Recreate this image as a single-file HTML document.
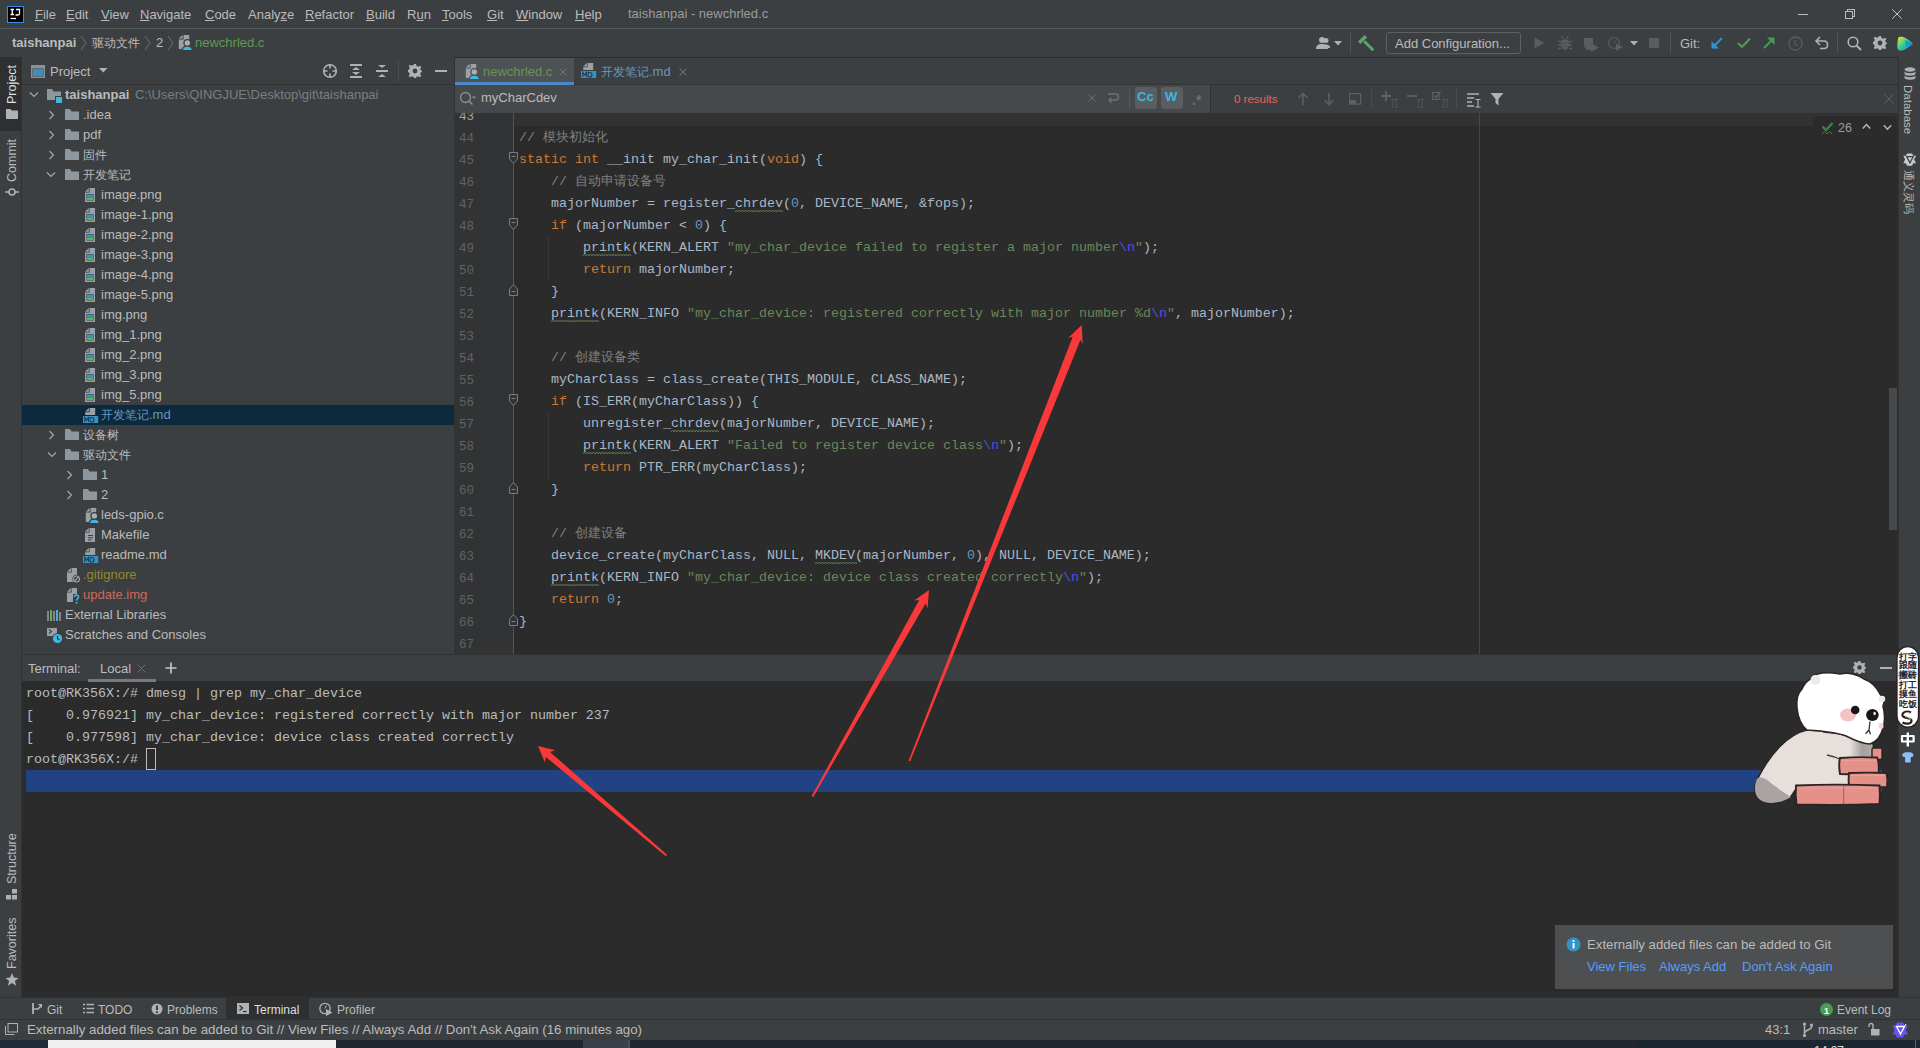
<!DOCTYPE html>
<html><head><meta charset="utf-8">
<style>
*{margin:0;padding:0;box-sizing:border-box}
html,body{width:1920px;height:1048px;overflow:hidden;background:#3c3f41}
body{position:relative;font-family:"Liberation Sans",sans-serif;font-size:13px;color:#bbbbbb;line-height:16px}
.a{position:absolute;white-space:nowrap}
.m{font-family:"Liberation Mono",monospace}
svg.a{overflow:visible}
</style></head><body>
<div class="a" style="left:0px;top:0px;width:1920px;height:28px;background:#3c3f41;"></div>
<div class="a" style="left:0px;top:28px;width:1920px;height:1px;background:#515658;"></div>
<svg class="a" style="left:7px;top:6px;" width="17" height="17" viewBox="0 0 17 17"><rect x="0.5" y="0.5" width="16" height="16" fill="#000" stroke="#2f8cff"/><path d="M3.5 3.5H7M5.25 3.5V8.5M3.5 8.5H7" stroke="#fff" stroke-width="1.3"/><path d="M9 3.5H12.5V7.5C12.5 8.5 12 9 11 9H8.5" stroke="#fff" stroke-width="1.3" fill="none"/><path d="M3.5 12.5H9" stroke="#fff" stroke-width="1.3"/></svg>
<div class="a" style="left:35px;top:7px;color:#bbbbbb;font-size:13px;font-weight:normal;font-family:"Liberation Sans",sans-serif;"><u>F</u>ile</div>
<div class="a" style="left:66px;top:7px;color:#bbbbbb;font-size:13px;font-weight:normal;font-family:"Liberation Sans",sans-serif;"><u>E</u>dit</div>
<div class="a" style="left:101px;top:7px;color:#bbbbbb;font-size:13px;font-weight:normal;font-family:"Liberation Sans",sans-serif;"><u>V</u>iew</div>
<div class="a" style="left:140px;top:7px;color:#bbbbbb;font-size:13px;font-weight:normal;font-family:"Liberation Sans",sans-serif;"><u>N</u>avigate</div>
<div class="a" style="left:205px;top:7px;color:#bbbbbb;font-size:13px;font-weight:normal;font-family:"Liberation Sans",sans-serif;"><u>C</u>ode</div>
<div class="a" style="left:248px;top:7px;color:#bbbbbb;font-size:13px;font-weight:normal;font-family:"Liberation Sans",sans-serif;">Analy<u>z</u>e</div>
<div class="a" style="left:305px;top:7px;color:#bbbbbb;font-size:13px;font-weight:normal;font-family:"Liberation Sans",sans-serif;"><u>R</u>efactor</div>
<div class="a" style="left:366px;top:7px;color:#bbbbbb;font-size:13px;font-weight:normal;font-family:"Liberation Sans",sans-serif;"><u>B</u>uild</div>
<div class="a" style="left:407px;top:7px;color:#bbbbbb;font-size:13px;font-weight:normal;font-family:"Liberation Sans",sans-serif;">R<u>u</u>n</div>
<div class="a" style="left:442px;top:7px;color:#bbbbbb;font-size:13px;font-weight:normal;font-family:"Liberation Sans",sans-serif;"><u>T</u>ools</div>
<div class="a" style="left:487px;top:7px;color:#bbbbbb;font-size:13px;font-weight:normal;font-family:"Liberation Sans",sans-serif;"><u>G</u>it</div>
<div class="a" style="left:516px;top:7px;color:#bbbbbb;font-size:13px;font-weight:normal;font-family:"Liberation Sans",sans-serif;"><u>W</u>indow</div>
<div class="a" style="left:575px;top:7px;color:#bbbbbb;font-size:13px;font-weight:normal;font-family:"Liberation Sans",sans-serif;"><u>H</u>elp</div>
<div class="a" style="left:628px;top:6px;color:#9a9c9e;font-size:13px;font-weight:normal;font-family:"Liberation Sans",sans-serif;">taishanpai - newchrled.c</div>
<div class="a" style="left:1798px;top:14px;width:10px;height:1px;background:#bdbdbd;"></div>
<div class="a" style="left:1847px;top:9px;width:8px;height:8px;border:1px solid #bdbdbd"></div>
<div class="a" style="left:1845px;top:11px;width:8px;height:8px;border:1px solid #bdbdbd;background:#3c3f41"></div>
<svg class="a" style="left:1892px;top:9px;" width="10" height="10" viewBox="0 0 10 10"><path d="M0.3 0.3L9.7 9.7M9.7 0.3L0.3 9.7" stroke="#c4c4c4" stroke-width="1"/></svg>
<div class="a" style="left:0px;top:29px;width:1920px;height:28px;background:#3c3f41;"></div>
<div class="a" style="left:0px;top:57px;width:1920px;height:1px;background:#2b2b2b;"></div>
<div class="a" style="left:12px;top:35px;color:#bbbbbb;font-size:13px;font-weight:bold;font-family:"Liberation Sans",sans-serif;">taishanpai</div>
<svg class="a" style="left:80px;top:35px;" width="8" height="16" viewBox="0 0 8 16"><path d="M1 1L6 8L1 15" stroke="#6c6f71" fill="none" stroke-width="1"/></svg>
<div class="a" style="left:92px;top:35px;color:#bbbbbb;font-size:13px;font-weight:normal;font-family:"Liberation Sans",sans-serif;"><span style="font-size:12px">驱动文件</span></div>
<div class="a" style="left:156px;top:35px;color:#bbbbbb;font-size:13px;font-weight:normal;font-family:"Liberation Sans",sans-serif;">2</div>
<svg class="a" style="left:144px;top:35px;" width="8" height="16" viewBox="0 0 8 16"><path d="M1 1L6 8L1 15" stroke="#6c6f71" fill="none" stroke-width="1"/></svg>
<svg class="a" style="left:167px;top:35px;" width="8" height="16" viewBox="0 0 8 16"><path d="M1 1L6 8L1 15" stroke="#6c6f71" fill="none" stroke-width="1"/></svg>
<svg class="a" style="left:178px;top:34px;" width="16" height="17" viewBox="0 0 16 17"><path d="M0.8 4.6L4.6 0.9V4.6Z" fill="#9aa0a5"/><path d="M5.6 0.9H11.2V15H0.8V5.6H5.6Z" fill="#9aa0a5"/><circle cx="9.3" cy="9" r="4" fill="#3c3f41"/><circle cx="9.3" cy="9" r="2.7" fill="#a9afb4"/><path d="M3.7 16.6C3.7 13 6 11.8 9.3 11.8C12.6 11.8 14.9 13 14.9 16.6Z" fill="#3c3f41"/><path d="M5 16C5 13.6 6.8 12.8 9.3 12.8C11.8 12.8 13.6 13.6 13.6 16Z" fill="#40b6e0"/></svg>
<div class="a" style="left:195px;top:35px;color:#629755;font-size:13px;font-weight:normal;font-family:"Liberation Sans",sans-serif;">newchrled.c</div>
<svg class="a" style="left:1316px;top:36px;" width="18" height="14" viewBox="0 0 18 14"><circle cx="6" cy="4" r="3" fill="#afb1b3"/><path d="M0 13C0 9 2.5 8 6 8C9.5 8 12 9 12 13Z" fill="#afb1b3"/><circle cx="10" cy="4.5" r="2.5" fill="#afb1b3"/><path d="M9 8.5C12 8.5 14 9 14 12H12" fill="#afb1b3"/></svg>
<svg class="a" style="left:1334px;top:41px;" width="9" height="5" viewBox="0 0 9 5"><path d="M0 0H8L4 4.5Z" fill="#afb1b3"/></svg>
<div class="a" style="left:1350px;top:33px;width:1px;height:20px;background:#515658;"></div>
<svg class="a" style="left:1358px;top:35px;" width="17" height="16" viewBox="0 0 17 16"><path d="M0 6.6L6.6 0L9 2.4L2.4 9Z" fill="#59a869"/><path d="M6.2 6.2L15.3 15.3" stroke="#59a869" stroke-width="2.9"/></svg>
<div class="a" style="left:1386px;top:32px;width:135px;height:22px;border:1px solid #5e6060;border-radius:3px"></div>
<div class="a" style="left:1395px;top:36px;color:#bbbbbb;font-size:13px;font-weight:normal;font-family:"Liberation Sans",sans-serif;">Add Configuration...</div>
<svg class="a" style="left:1534px;top:37px;" width="11" height="12" viewBox="0 0 11 12"><path d="M0.5 0.5L10.5 6L0.5 11.5Z" fill="#5a5d5f"/></svg>
<svg class="a" style="left:1558px;top:36px;" width="14" height="14" viewBox="0 0 14 14"><ellipse cx="7" cy="8.3" rx="4.3" ry="5.3" fill="#5a5d5f"/><path d="M0 5.5H3M11 5.5H14M0 9H3M11 9H14M0 12.5H3M11 12.5H14M3.5 0.5L5 2.5M10.5 0.5L9 2.5" stroke="#5a5d5f" stroke-width="1.4"/><path d="M4 7H10M4 10.3H10" stroke="#4a4d4f" stroke-width="1"/></svg>
<svg class="a" style="left:1583px;top:37px;" width="17" height="15" viewBox="0 0 17 15"><path d="M1 1H10V8C10 11 7 13 5.5 13C4 13 1 11 1 8Z" fill="#5a5d5f"/><path d="M8 6L16 10.5L8 15Z" fill="#5a5d5f"/></svg>
<svg class="a" style="left:1608px;top:36px;" width="16" height="16" viewBox="0 0 16 16"><circle cx="6" cy="7" r="5.5" fill="none" stroke="#5a5d5f" stroke-width="1.2"/><path d="M6 7L7.5 4.5" stroke="#5a5d5f"/><path d="M8 7.5L15 11L8 15Z" fill="#5a5d5f"/></svg>
<svg class="a" style="left:1630px;top:41px;" width="9" height="5" viewBox="0 0 9 5"><path d="M0 0H8L4 4.5Z" fill="#afb1b3"/></svg>
<div class="a" style="left:1649px;top:38px;width:10px;height:10px;background:#5a5d5f;"></div>
<div class="a" style="left:1670px;top:33px;width:1px;height:20px;background:#515658;"></div>
<div class="a" style="left:1680px;top:36px;color:#bbbbbb;font-size:13px;font-weight:normal;font-family:"Liberation Sans",sans-serif;">Git:</div>
<svg class="a" style="left:1711px;top:37px;" width="12" height="12" viewBox="0 0 12 12"><path d="M11 1L2 10" stroke="#3592c4" stroke-width="2"/><path d="M0.5 4V11.5H8Z" fill="#3592c4"/></svg>
<svg class="a" style="left:1737px;top:37px;" width="14" height="12" viewBox="0 0 14 12"><path d="M1 6L5 10L13 1.5" stroke="#499c54" stroke-width="2.2" fill="none"/></svg>
<svg class="a" style="left:1763px;top:37px;" width="12" height="12" viewBox="0 0 12 12"><path d="M1 11L10 2" stroke="#499c54" stroke-width="2"/><path d="M4 0.5H11.5V8Z" fill="#499c54"/></svg>
<svg class="a" style="left:1788px;top:36px;" width="15" height="15" viewBox="0 0 15 15"><circle cx="7.5" cy="7.5" r="6.5" fill="none" stroke="#5a5d5f" stroke-width="1.3"/><path d="M7 4V8L9.5 10" stroke="#5a5d5f" stroke-width="1.2" fill="none"/></svg>
<svg class="a" style="left:1815px;top:36px;" width="14" height="14" viewBox="0 0 14 14"><path d="M2 5H9C11 5 12.5 6.5 12.5 9C12.5 11.5 11 12.5 9 12.5H5" stroke="#afb1b3" stroke-width="1.6" fill="none"/><path d="M5 1L1 5L5 9" stroke="#afb1b3" stroke-width="1.6" fill="none"/></svg>
<div class="a" style="left:1837px;top:33px;width:1px;height:20px;background:#515658;"></div>
<svg class="a" style="left:1847px;top:36px;" width="15" height="15" viewBox="0 0 15 15"><circle cx="6" cy="6" r="4.8" fill="none" stroke="#afb1b3" stroke-width="1.6"/><path d="M9.5 9.5L14 14" stroke="#afb1b3" stroke-width="2"/></svg>
<svg class="a" style="left:1873px;top:36px;" width="14" height="14" viewBox="0 0 14 14"><g transform="scale(1.0)"><path d="M6 0H8L8.5 2L10.3 2.8L12 1.7L13.3 3L12.2 4.7L13 6.5L14 7V8L12.9 8.3L12.2 10.2L13.3 11.9L11.9 13.3L10.2 12.2L8.4 12.9L8 14H6L5.6 12.9L3.8 12.2L2.1 13.3L0.7 11.9L1.8 10.2L1.1 8.4L0 8V6L1.1 5.6L1.8 3.8L0.7 2.1L2.1 0.7L3.8 1.8L5.6 1.1Z" fill="#afb1b3"/><circle cx="7" cy="7" r="2.4" fill="#3c3f41"/></g></svg>
<svg class="a" style="left:1897px;top:36px;" width="17" height="15" viewBox="0 0 17 15"><defs><linearGradient id="lg1" x1="0" y1="0" x2="1" y2="1"><stop offset="0" stop-color="#f5e62c"/><stop offset="0.45" stop-color="#3ccf8f"/><stop offset="1" stop-color="#087cfa"/></linearGradient></defs><path d="M2 1C5 0 9 1 16 7.5C10 13 6 15 3 14.5C0.5 14 0 12 0.5 7C1 3 1 1.5 2 1Z" fill="url(#lg1)"/><path d="M8 4L16 7.5L9 11Z" fill="#0a8de0" opacity="0.7"/></svg>
<div class="a" style="left:0px;top:57px;width:21px;height:940px;background:#3c3f41;"></div>
<div class="a" style="left:21px;top:57px;width:1px;height:940px;background:#323232;"></div>
<div class="a" style="left:0px;top:57px;width:21px;height:74px;background:#2d2f31;"></div>
<div class="a" style="left:5px;top:104px;color:#dfdfdf;font-size:12.5px;line-height:14px;transform-origin:0 0;transform:rotate(-90deg)">Project</div>
<svg class="a" style="left:6px;top:109px;" width="12" height="10" viewBox="0 0 12 10"><path d="M0 0H4.5L6 1.5H12V10H0Z" fill="#afb1b3"/></svg>
<div class="a" style="left:5px;top:182px;color:#bbbbbb;font-size:12.5px;line-height:14px;transform-origin:0 0;transform:rotate(-90deg)">Commit</div>
<svg class="a" style="left:5px;top:187px;" width="14" height="10" viewBox="0 0 14 10"><circle cx="7" cy="5" r="3" fill="none" stroke="#afb1b3" stroke-width="1.6"/><path d="M0 5H4M10 5H14" stroke="#afb1b3" stroke-width="1.6"/></svg>
<div class="a" style="left:5px;top:884px;color:#bbbbbb;font-size:12.5px;line-height:14px;transform-origin:0 0;transform:rotate(-90deg)">Structure</div>
<svg class="a" style="left:6px;top:889px;" width="12" height="11" viewBox="0 0 12 11"><rect x="6" y="0" width="5" height="4.5" fill="#afb1b3"/><rect x="0" y="6" width="5" height="4.5" fill="#afb1b3"/><rect x="6" y="6" width="5" height="4.5" fill="#afb1b3"/></svg>
<div class="a" style="left:5px;top:969px;color:#bbbbbb;font-size:12.5px;line-height:14px;transform-origin:0 0;transform:rotate(-90deg)">Favorites</div>
<svg class="a" style="left:5px;top:973px;" width="14" height="13" viewBox="0 0 14 13"><path d="M7 0L8.8 4.6L13.5 4.9L9.9 8L11.1 12.7L7 10.1L2.9 12.7L4.1 8L0.5 4.9L5.2 4.6Z" fill="#afb1b3"/></svg>
<div class="a" style="left:22px;top:57px;width:432px;height:598px;background:#3c3f41;"></div>
<div class="a" style="left:22px;top:84px;width:432px;height:1px;background:#323232;"></div>
<div class="a" style="left:454px;top:57px;width:1px;height:598px;background:#323232;"></div>
<svg class="a" style="left:31px;top:65px;" width="14" height="13" viewBox="0 0 14 13"><path d="M0 0H14V13H0Z M1.5 3.5V11.5H12.5V3.5Z" fill="#87939a" fill-rule="evenodd"/><rect x="2" y="4" width="10" height="7" fill="#3d8fb5"/></svg>
<div class="a" style="left:50px;top:64px;color:#bbbbbb;font-size:13px;font-weight:normal;font-family:"Liberation Sans",sans-serif;">Project</div>
<svg class="a" style="left:99px;top:68px;" width="9" height="5" viewBox="0 0 9 5"><path d="M0 0H8.5L4.25 4.5Z" fill="#afb1b3"/></svg>
<svg class="a" style="left:322px;top:63px;" width="16" height="16" viewBox="0 0 16 16"><circle cx="8" cy="8" r="6.3" fill="none" stroke="#afb1b3" stroke-width="1.6"/><path d="M8 1.5V5.5M8 10.5V14.5M1.5 8H5.5M10.5 8H14.5" stroke="#afb1b3" stroke-width="1.7"/></svg>
<svg class="a" style="left:349px;top:63px;" width="14" height="16" viewBox="0 0 14 16"><path d="M1 2H13M1 14H13" stroke="#afb1b3" stroke-width="2"/><path d="M7 4L3 7H11ZM7 12L3 9H11Z" fill="#afb1b3"/></svg>
<svg class="a" style="left:375px;top:63px;" width="14" height="16" viewBox="0 0 14 16"><path d="M1 8H13" stroke="#afb1b3" stroke-width="2"/><path d="M3 2H11L7 5ZM3 14H11L7 11Z" fill="#afb1b3"/></svg>
<div class="a" style="left:398px;top:61px;width:1px;height:20px;background:#4a4d4f;"></div>
<svg class="a" style="left:408px;top:64px;" width="14" height="14" viewBox="0 0 14 14"><g transform="scale(1.0)"><path d="M6 0H8L8.5 2L10.3 2.8L12 1.7L13.3 3L12.2 4.7L13 6.5L14 7V8L12.9 8.3L12.2 10.2L13.3 11.9L11.9 13.3L10.2 12.2L8.4 12.9L8 14H6L5.6 12.9L3.8 12.2L2.1 13.3L0.7 11.9L1.8 10.2L1.1 8.4L0 8V6L1.1 5.6L1.8 3.8L0.7 2.1L2.1 0.7L3.8 1.8L5.6 1.1Z" fill="#afb1b3"/><circle cx="7" cy="7" r="2.4" fill="#3c3f41"/></g></svg>
<div class="a" style="left:435px;top:70px;width:12px;height:2px;background:#afb1b3;"></div>
<div class="a" style="left:447px;top:86px;width:6px;height:23px;background:#5a5d5f;opacity:0.0"></div>
<svg class="a" style="left:29px;top:91px;" width="10" height="8" viewBox="0 0 10 8"><path d="M1 1.5L5 5.5L9 1.5" stroke="#a4a6a8" stroke-width="1.2" fill="none"/></svg>
<svg class="a" style="left:47px;top:89px;" width="14" height="11" viewBox="0 0 14 11"><path d="M0 0H5L6.5 2.5H14V11H0Z" fill="#8e979e"/></svg>
<div class="a" style="left:55px;top:96px;width:8px;height:8px;background:#40b6e0;border:1px solid #3c3f41"></div>
<div class="a" style="left:65px;top:87px;color:#bbbbbb;font-size:13px;font-weight:bold;font-family:"Liberation Sans",sans-serif;">taishanpai</div>
<div class="a" style="left:135px;top:87px;color:#7b7e80;font-size:13px;font-weight:normal;font-family:"Liberation Sans",sans-serif;">C:\Users\QINGJUE\Desktop\git\taishanpai</div>
<svg class="a" style="left:48px;top:110px;" width="8" height="10" viewBox="0 0 8 10"><path d="M1.5 1L5.5 5L1.5 9" stroke="#a4a6a8" stroke-width="1.2" fill="none"/></svg>
<svg class="a" style="left:65px;top:109px;" width="14" height="11" viewBox="0 0 14 11"><path d="M0 0H5L6.5 2.5H14V11H0Z" fill="#8e979e"/></svg>
<div class="a" style="left:83px;top:107px;color:#bbbbbb;font-size:13px;font-weight:normal;font-family:"Liberation Sans",sans-serif;">.idea</div>
<svg class="a" style="left:48px;top:130px;" width="8" height="10" viewBox="0 0 8 10"><path d="M1.5 1L5.5 5L1.5 9" stroke="#a4a6a8" stroke-width="1.2" fill="none"/></svg>
<svg class="a" style="left:65px;top:129px;" width="14" height="11" viewBox="0 0 14 11"><path d="M0 0H5L6.5 2.5H14V11H0Z" fill="#8e979e"/></svg>
<div class="a" style="left:83px;top:127px;color:#bbbbbb;font-size:13px;font-weight:normal;font-family:"Liberation Sans",sans-serif;">pdf</div>
<svg class="a" style="left:48px;top:150px;" width="8" height="10" viewBox="0 0 8 10"><path d="M1.5 1L5.5 5L1.5 9" stroke="#a4a6a8" stroke-width="1.2" fill="none"/></svg>
<svg class="a" style="left:65px;top:149px;" width="14" height="11" viewBox="0 0 14 11"><path d="M0 0H5L6.5 2.5H14V11H0Z" fill="#8e979e"/></svg>
<div class="a" style="left:83px;top:147px;color:#bbbbbb;font-size:13px;font-weight:normal;font-family:"Liberation Sans",sans-serif;"><span style="font-size:12px">固件</span></div>
<svg class="a" style="left:46px;top:171px;" width="10" height="8" viewBox="0 0 10 8"><path d="M1 1.5L5 5.5L9 1.5" stroke="#a4a6a8" stroke-width="1.2" fill="none"/></svg>
<svg class="a" style="left:65px;top:169px;" width="14" height="11" viewBox="0 0 14 11"><path d="M0 0H5L6.5 2.5H14V11H0Z" fill="#8e979e"/></svg>
<div class="a" style="left:83px;top:167px;color:#bbbbbb;font-size:13px;font-weight:normal;font-family:"Liberation Sans",sans-serif;"><span style="font-size:12px">开发笔记</span></div>
<svg class="a" style="left:85px;top:188px;" width="16" height="17" viewBox="0 0 16 17"><path d="M0 3.8L3.8 0V3.8Z" fill="#9aa0a5"/><path d="M4.6 0H10V14H0V4.6H4.6Z" fill="#9aa0a5"/><rect x="1.5" y="6" width="7" height="6.5" fill="#3c3f41"/><rect x="2" y="6.5" width="6" height="3" fill="#3592c4"/><path d="M2 12V9.8C3.5 8.8 5 9.8 6 9.6C7 9.4 7.5 9.2 8 9.2V12Z" fill="#62b543"/></svg>
<div class="a" style="left:101px;top:187px;color:#bbbbbb;font-size:13px;font-weight:normal;font-family:"Liberation Sans",sans-serif;">image.png</div>
<svg class="a" style="left:85px;top:208px;" width="16" height="17" viewBox="0 0 16 17"><path d="M0 3.8L3.8 0V3.8Z" fill="#9aa0a5"/><path d="M4.6 0H10V14H0V4.6H4.6Z" fill="#9aa0a5"/><rect x="1.5" y="6" width="7" height="6.5" fill="#3c3f41"/><rect x="2" y="6.5" width="6" height="3" fill="#3592c4"/><path d="M2 12V9.8C3.5 8.8 5 9.8 6 9.6C7 9.4 7.5 9.2 8 9.2V12Z" fill="#62b543"/></svg>
<div class="a" style="left:101px;top:207px;color:#bbbbbb;font-size:13px;font-weight:normal;font-family:"Liberation Sans",sans-serif;">image-1.png</div>
<svg class="a" style="left:85px;top:228px;" width="16" height="17" viewBox="0 0 16 17"><path d="M0 3.8L3.8 0V3.8Z" fill="#9aa0a5"/><path d="M4.6 0H10V14H0V4.6H4.6Z" fill="#9aa0a5"/><rect x="1.5" y="6" width="7" height="6.5" fill="#3c3f41"/><rect x="2" y="6.5" width="6" height="3" fill="#3592c4"/><path d="M2 12V9.8C3.5 8.8 5 9.8 6 9.6C7 9.4 7.5 9.2 8 9.2V12Z" fill="#62b543"/></svg>
<div class="a" style="left:101px;top:227px;color:#bbbbbb;font-size:13px;font-weight:normal;font-family:"Liberation Sans",sans-serif;">image-2.png</div>
<svg class="a" style="left:85px;top:248px;" width="16" height="17" viewBox="0 0 16 17"><path d="M0 3.8L3.8 0V3.8Z" fill="#9aa0a5"/><path d="M4.6 0H10V14H0V4.6H4.6Z" fill="#9aa0a5"/><rect x="1.5" y="6" width="7" height="6.5" fill="#3c3f41"/><rect x="2" y="6.5" width="6" height="3" fill="#3592c4"/><path d="M2 12V9.8C3.5 8.8 5 9.8 6 9.6C7 9.4 7.5 9.2 8 9.2V12Z" fill="#62b543"/></svg>
<div class="a" style="left:101px;top:247px;color:#bbbbbb;font-size:13px;font-weight:normal;font-family:"Liberation Sans",sans-serif;">image-3.png</div>
<svg class="a" style="left:85px;top:268px;" width="16" height="17" viewBox="0 0 16 17"><path d="M0 3.8L3.8 0V3.8Z" fill="#9aa0a5"/><path d="M4.6 0H10V14H0V4.6H4.6Z" fill="#9aa0a5"/><rect x="1.5" y="6" width="7" height="6.5" fill="#3c3f41"/><rect x="2" y="6.5" width="6" height="3" fill="#3592c4"/><path d="M2 12V9.8C3.5 8.8 5 9.8 6 9.6C7 9.4 7.5 9.2 8 9.2V12Z" fill="#62b543"/></svg>
<div class="a" style="left:101px;top:267px;color:#bbbbbb;font-size:13px;font-weight:normal;font-family:"Liberation Sans",sans-serif;">image-4.png</div>
<svg class="a" style="left:85px;top:288px;" width="16" height="17" viewBox="0 0 16 17"><path d="M0 3.8L3.8 0V3.8Z" fill="#9aa0a5"/><path d="M4.6 0H10V14H0V4.6H4.6Z" fill="#9aa0a5"/><rect x="1.5" y="6" width="7" height="6.5" fill="#3c3f41"/><rect x="2" y="6.5" width="6" height="3" fill="#3592c4"/><path d="M2 12V9.8C3.5 8.8 5 9.8 6 9.6C7 9.4 7.5 9.2 8 9.2V12Z" fill="#62b543"/></svg>
<div class="a" style="left:101px;top:287px;color:#bbbbbb;font-size:13px;font-weight:normal;font-family:"Liberation Sans",sans-serif;">image-5.png</div>
<svg class="a" style="left:85px;top:308px;" width="16" height="17" viewBox="0 0 16 17"><path d="M0 3.8L3.8 0V3.8Z" fill="#9aa0a5"/><path d="M4.6 0H10V14H0V4.6H4.6Z" fill="#9aa0a5"/><rect x="1.5" y="6" width="7" height="6.5" fill="#3c3f41"/><rect x="2" y="6.5" width="6" height="3" fill="#3592c4"/><path d="M2 12V9.8C3.5 8.8 5 9.8 6 9.6C7 9.4 7.5 9.2 8 9.2V12Z" fill="#62b543"/></svg>
<div class="a" style="left:101px;top:307px;color:#bbbbbb;font-size:13px;font-weight:normal;font-family:"Liberation Sans",sans-serif;">img.png</div>
<svg class="a" style="left:85px;top:328px;" width="16" height="17" viewBox="0 0 16 17"><path d="M0 3.8L3.8 0V3.8Z" fill="#9aa0a5"/><path d="M4.6 0H10V14H0V4.6H4.6Z" fill="#9aa0a5"/><rect x="1.5" y="6" width="7" height="6.5" fill="#3c3f41"/><rect x="2" y="6.5" width="6" height="3" fill="#3592c4"/><path d="M2 12V9.8C3.5 8.8 5 9.8 6 9.6C7 9.4 7.5 9.2 8 9.2V12Z" fill="#62b543"/></svg>
<div class="a" style="left:101px;top:327px;color:#bbbbbb;font-size:13px;font-weight:normal;font-family:"Liberation Sans",sans-serif;">img_1.png</div>
<svg class="a" style="left:85px;top:348px;" width="16" height="17" viewBox="0 0 16 17"><path d="M0 3.8L3.8 0V3.8Z" fill="#9aa0a5"/><path d="M4.6 0H10V14H0V4.6H4.6Z" fill="#9aa0a5"/><rect x="1.5" y="6" width="7" height="6.5" fill="#3c3f41"/><rect x="2" y="6.5" width="6" height="3" fill="#3592c4"/><path d="M2 12V9.8C3.5 8.8 5 9.8 6 9.6C7 9.4 7.5 9.2 8 9.2V12Z" fill="#62b543"/></svg>
<div class="a" style="left:101px;top:347px;color:#bbbbbb;font-size:13px;font-weight:normal;font-family:"Liberation Sans",sans-serif;">img_2.png</div>
<svg class="a" style="left:85px;top:368px;" width="16" height="17" viewBox="0 0 16 17"><path d="M0 3.8L3.8 0V3.8Z" fill="#9aa0a5"/><path d="M4.6 0H10V14H0V4.6H4.6Z" fill="#9aa0a5"/><rect x="1.5" y="6" width="7" height="6.5" fill="#3c3f41"/><rect x="2" y="6.5" width="6" height="3" fill="#3592c4"/><path d="M2 12V9.8C3.5 8.8 5 9.8 6 9.6C7 9.4 7.5 9.2 8 9.2V12Z" fill="#62b543"/></svg>
<div class="a" style="left:101px;top:367px;color:#bbbbbb;font-size:13px;font-weight:normal;font-family:"Liberation Sans",sans-serif;">img_3.png</div>
<svg class="a" style="left:85px;top:388px;" width="16" height="17" viewBox="0 0 16 17"><path d="M0 3.8L3.8 0V3.8Z" fill="#9aa0a5"/><path d="M4.6 0H10V14H0V4.6H4.6Z" fill="#9aa0a5"/><rect x="1.5" y="6" width="7" height="6.5" fill="#3c3f41"/><rect x="2" y="6.5" width="6" height="3" fill="#3592c4"/><path d="M2 12V9.8C3.5 8.8 5 9.8 6 9.6C7 9.4 7.5 9.2 8 9.2V12Z" fill="#62b543"/></svg>
<div class="a" style="left:101px;top:387px;color:#bbbbbb;font-size:13px;font-weight:normal;font-family:"Liberation Sans",sans-serif;">img_5.png</div>
<div class="a" style="left:22px;top:405px;width:432px;height:20px;background:#0d293e;"></div>
<svg class="a" style="left:83px;top:408px;" width="16" height="17" viewBox="0 0 16 17"><path d="M2.2 3.5L5.9 0V3.5Z" fill="#9aa0a5"/><path d="M6.6 0H12.2V7H2.2V4.2H6.6Z" fill="#9aa0a5"/><rect x="0" y="8" width="15.2" height="7" fill="#3592c4"/><path d="M1.8 14V9.5L3.6 12L5.4 9.5V14M7.2 9.5V14H8.8C10.2 14 11 13 11 11.7C11 10.4 10.2 9.5 8.8 9.5Z" stroke="#1e3c52" stroke-width="1.1" fill="none"/></svg>
<div class="a" style="left:101px;top:407px;color:#6897bb;font-size:13px;font-weight:normal;font-family:"Liberation Sans",sans-serif;"><span style="font-size:12px">开发笔记</span>.md</div>
<svg class="a" style="left:48px;top:430px;" width="8" height="10" viewBox="0 0 8 10"><path d="M1.5 1L5.5 5L1.5 9" stroke="#a4a6a8" stroke-width="1.2" fill="none"/></svg>
<svg class="a" style="left:65px;top:429px;" width="14" height="11" viewBox="0 0 14 11"><path d="M0 0H5L6.5 2.5H14V11H0Z" fill="#8e979e"/></svg>
<div class="a" style="left:83px;top:427px;color:#bbbbbb;font-size:13px;font-weight:normal;font-family:"Liberation Sans",sans-serif;"><span style="font-size:12px">设备树</span></div>
<svg class="a" style="left:47px;top:451px;" width="10" height="8" viewBox="0 0 10 8"><path d="M1 1.5L5 5.5L9 1.5" stroke="#a4a6a8" stroke-width="1.2" fill="none"/></svg>
<svg class="a" style="left:65px;top:449px;" width="14" height="11" viewBox="0 0 14 11"><path d="M0 0H5L6.5 2.5H14V11H0Z" fill="#8e979e"/></svg>
<div class="a" style="left:83px;top:447px;color:#bbbbbb;font-size:13px;font-weight:normal;font-family:"Liberation Sans",sans-serif;"><span style="font-size:12px">驱动文件</span></div>
<svg class="a" style="left:66px;top:470px;" width="8" height="10" viewBox="0 0 8 10"><path d="M1.5 1L5.5 5L1.5 9" stroke="#a4a6a8" stroke-width="1.2" fill="none"/></svg>
<svg class="a" style="left:83px;top:469px;" width="14" height="11" viewBox="0 0 14 11"><path d="M0 0H5L6.5 2.5H14V11H0Z" fill="#8e979e"/></svg>
<div class="a" style="left:101px;top:467px;color:#bbbbbb;font-size:13px;font-weight:normal;font-family:"Liberation Sans",sans-serif;">1</div>
<svg class="a" style="left:66px;top:490px;" width="8" height="10" viewBox="0 0 8 10"><path d="M1.5 1L5.5 5L1.5 9" stroke="#a4a6a8" stroke-width="1.2" fill="none"/></svg>
<svg class="a" style="left:83px;top:489px;" width="14" height="11" viewBox="0 0 14 11"><path d="M0 0H5L6.5 2.5H14V11H0Z" fill="#8e979e"/></svg>
<div class="a" style="left:101px;top:487px;color:#bbbbbb;font-size:13px;font-weight:normal;font-family:"Liberation Sans",sans-serif;">2</div>
<svg class="a" style="left:85px;top:507px;" width="16" height="17" viewBox="0 0 16 17"><path d="M0.8 4.6L4.6 0.9V4.6Z" fill="#9aa0a5"/><path d="M5.6 0.9H11.2V15H0.8V5.6H5.6Z" fill="#9aa0a5"/><circle cx="9.3" cy="9" r="4" fill="#3c3f41"/><circle cx="9.3" cy="9" r="2.7" fill="#a9afb4"/><path d="M3.7 16.6C3.7 13 6 11.8 9.3 11.8C12.6 11.8 14.9 13 14.9 16.6Z" fill="#3c3f41"/><path d="M5 16C5 13.6 6.8 12.8 9.3 12.8C11.8 12.8 13.6 13.6 13.6 16Z" fill="#40b6e0"/></svg>
<div class="a" style="left:101px;top:507px;color:#bbbbbb;font-size:13px;font-weight:normal;font-family:"Liberation Sans",sans-serif;">leds-gpio.c</div>
<svg class="a" style="left:85px;top:528px;" width="16" height="17" viewBox="0 0 16 17"><path d="M0 3.8L3.8 0V3.8Z" fill="#9aa0a5"/><path d="M4.6 0H10V14H0V4.6H4.6Z" fill="#9aa0a5"/><path d="M3 7.5H8M3 9.8H8M3 12H6.5" stroke="#3c3f41" stroke-width="1.1"/></svg>
<div class="a" style="left:101px;top:527px;color:#bbbbbb;font-size:13px;font-weight:normal;font-family:"Liberation Sans",sans-serif;">Makefile</div>
<svg class="a" style="left:83px;top:548px;" width="16" height="17" viewBox="0 0 16 17"><path d="M2.2 3.5L5.9 0V3.5Z" fill="#9aa0a5"/><path d="M6.6 0H12.2V7H2.2V4.2H6.6Z" fill="#9aa0a5"/><rect x="0" y="8" width="15.2" height="7" fill="#3592c4"/><path d="M1.8 14V9.5L3.6 12L5.4 9.5V14M7.2 9.5V14H8.8C10.2 14 11 13 11 11.7C11 10.4 10.2 9.5 8.8 9.5Z" stroke="#1e3c52" stroke-width="1.1" fill="none"/></svg>
<div class="a" style="left:101px;top:547px;color:#bbbbbb;font-size:13px;font-weight:normal;font-family:"Liberation Sans",sans-serif;">readme.md</div>
<svg class="a" style="left:67px;top:568px;" width="16" height="17" viewBox="0 0 16 17"><path d="M0 3.8L3.8 0V3.8Z" fill="#9aa0a5"/><path d="M4.6 0H10V14H0V4.6H4.6Z" fill="#9aa0a5"/><circle cx="9.5" cy="11" r="4.2" fill="#3c3f41"/><circle cx="9.5" cy="11" r="3" fill="none" stroke="#9aa0a5" stroke-width="1.1"/><path d="M7.5 13L11.5 9" stroke="#9aa0a5" stroke-width="1.1"/></svg>
<div class="a" style="left:83px;top:567px;color:#8f8c2a;font-size:13px;font-weight:normal;font-family:"Liberation Sans",sans-serif;">.gitignore</div>
<svg class="a" style="left:67px;top:588px;" width="16" height="17" viewBox="0 0 16 17"><path d="M0 3.8L3.8 0V3.8Z" fill="#9aa0a5"/><path d="M4.6 0H10V14H0V4.6H4.6Z" fill="#9aa0a5"/><rect x="6" y="6" width="8" height="11" fill="#3c3f41"/><path d="M7.3 9C7.3 7.6 8.3 7 9.4 7C10.6 7 11.5 7.8 11.5 9C11.5 10.6 9.6 10.7 9.6 12.5" stroke="#40b6e0" stroke-width="1.5" fill="none"/><circle cx="9.6" cy="14.8" r="1" fill="#40b6e0"/></svg>
<div class="a" style="left:83px;top:587px;color:#d1675a;font-size:13px;font-weight:normal;font-family:"Liberation Sans",sans-serif;">update.img</div>
<svg class="a" style="left:47px;top:610px;" width="15" height="11" viewBox="0 0 15 11"><path d="M1 1V11M4 0V11M7 1V11M10 0V11M13 2V11" stroke="#9aa0a5" stroke-width="1.5"/><path d="M4 0V11" stroke="#62b543" stroke-width="1.5"/><path d="M10 0V11" stroke="#40b6e0" stroke-width="1.5"/></svg>
<div class="a" style="left:65px;top:607px;color:#bbbbbb;font-size:13px;font-weight:normal;font-family:"Liberation Sans",sans-serif;">External Libraries</div>
<svg class="a" style="left:47px;top:628px;" width="16" height="16" viewBox="0 0 16 16"><rect x="0" y="0" width="10" height="8" fill="#9aa0a5"/><path d="M2 1.5L4.5 3.5L2 5.5" stroke="#3c3f41" stroke-width="1.1" fill="none"/><circle cx="10.5" cy="10.5" r="5.5" fill="#3c3f41"/><circle cx="10.5" cy="10.5" r="4.6" fill="#40b6e0"/><path d="M10.5 7.8V10.8L12.5 12" stroke="#2b2b2b" stroke-width="1.1" fill="none"/></svg>
<div class="a" style="left:65px;top:627px;color:#bbbbbb;font-size:13px;font-weight:normal;font-family:"Liberation Sans",sans-serif;">Scratches and Consoles</div>
<div class="a" style="left:455px;top:58px;width:1444px;height:27px;background:#3c3f41;"></div>
<div class="a" style="left:455px;top:84px;width:1444px;height:1px;background:#323232;"></div>
<div class="a" style="left:455px;top:58px;width:119px;height:27px;background:#4e5254;"></div>
<div class="a" style="left:455px;top:82px;width:119px;height:3px;background:#4a88c7;"></div>
<svg class="a" style="left:465px;top:63px;" width="16" height="17" viewBox="0 0 16 17"><path d="M0.8 4.6L4.6 0.9V4.6Z" fill="#9aa0a5"/><path d="M5.6 0.9H11.2V15H0.8V5.6H5.6Z" fill="#9aa0a5"/><circle cx="9.3" cy="9" r="4" fill="#4e5254"/><circle cx="9.3" cy="9" r="2.7" fill="#a9afb4"/><path d="M3.7 16.6C3.7 13 6 11.8 9.3 11.8C12.6 11.8 14.9 13 14.9 16.6Z" fill="#4e5254"/><path d="M5 16C5 13.6 6.8 12.8 9.3 12.8C11.8 12.8 13.6 13.6 13.6 16Z" fill="#40b6e0"/></svg>
<div class="a" style="left:483px;top:64px;color:#629755;font-size:13px;font-weight:normal;font-family:"Liberation Sans",sans-serif;">newchrled.c</div>
<svg class="a" style="left:559px;top:68px;" width="8" height="8" viewBox="0 0 8 8"><path d="M0.5 0.5L7.5 7.5M7.5 0.5L0.5 7.5" stroke="#75787a" stroke-width="1"/></svg>
<svg class="a" style="left:581px;top:63px;" width="16" height="17" viewBox="0 0 16 17"><path d="M2.2 3.5L5.9 0V3.5Z" fill="#9aa0a5"/><path d="M6.6 0H12.2V7H2.2V4.2H6.6Z" fill="#9aa0a5"/><rect x="0" y="8" width="15.2" height="7" fill="#3592c4"/><path d="M1.8 14V9.5L3.6 12L5.4 9.5V14M7.2 9.5V14H8.8C10.2 14 11 13 11 11.7C11 10.4 10.2 9.5 8.8 9.5Z" stroke="#1e3c52" stroke-width="1.1" fill="none"/></svg>
<div class="a" style="left:601px;top:64px;color:#6897bb;font-size:13px;font-weight:normal;font-family:"Liberation Sans",sans-serif;"><span style="font-size:12px">开发笔记</span>.md</div>
<svg class="a" style="left:679px;top:68px;" width="8" height="8" viewBox="0 0 8 8"><path d="M0.5 0.5L7.5 7.5M7.5 0.5L0.5 7.5" stroke="#75787a" stroke-width="1"/></svg>
<div class="a" style="left:455px;top:85px;width:755px;height:28px;background:#46494b;"></div>
<div class="a" style="left:1210px;top:85px;width:689px;height:28px;background:#3c3f41;"></div>
<div class="a" style="left:1210px;top:85px;width:1px;height:28px;background:#323232;"></div>
<svg class="a" style="left:459px;top:91px;" width="18" height="16" viewBox="0 0 18 16"><circle cx="6.5" cy="6.5" r="5" fill="none" stroke="#8c8e90" stroke-width="1.3"/><path d="M10 10L13.5 13.5" stroke="#8c8e90" stroke-width="1.5"/><path d="M13 5.5H17L15 8Z" fill="#8c8e90"/></svg>
<div class="a" style="left:481px;top:90px;color:#bbbbbb;font-size:13px;font-weight:normal;font-family:"Liberation Sans",sans-serif;">myCharCdev</div>
<svg class="a" style="left:1088px;top:94px;" width="8" height="8" viewBox="0 0 8 8"><path d="M0.5 0.5L7.5 7.5M7.5 0.5L0.5 7.5" stroke="#6e7174" stroke-width="1"/></svg>
<svg class="a" style="left:1106px;top:91px;" width="14" height="14" viewBox="0 0 14 14"><path d="M2 3H9.5C11.5 3 12.5 4 12.5 6C12.5 8 11.5 9 9.5 9H3" stroke="#6e7174" stroke-width="1.4" fill="none"/><path d="M5.5 6L2 9.2L5.5 12.5Z" fill="#6e7174"/></svg>
<div class="a" style="left:1129px;top:89px;width:1px;height:20px;background:#55595b;"></div>
<div class="a" style="left:1135px;top:87px;width:22px;height:22px;background:#5a5e60;border-radius:3px"></div>
<div class="a" style="left:1137px;top:89px;color:#40b6e0;font-size:13px;font-weight:bold;font-family:"Liberation Sans",sans-serif;line-height:20px;letter-spacing:-0.3px">Cc</div>
<div class="a" style="left:1161px;top:87px;width:22px;height:22px;background:#5a5e60;border-radius:3px"></div>
<div class="a" style="left:1165px;top:89px;color:#40b6e0;font-size:13px;font-weight:bold;font-family:"Liberation Sans",sans-serif;line-height:20px">W</div>
<div class="a" style="left:1192px;top:92px;color:#6e7174;font-size:14px;font-weight:bold;font-family:"Liberation Sans",sans-serif;line-height:18px">.*</div>
<div class="a" style="left:1234px;top:91px;color:#e8625a;font-size:11.5px;font-weight:normal;font-family:"Liberation Sans",sans-serif;">0 results</div>
<svg class="a" style="left:1297px;top:92px;" width="12" height="14" viewBox="0 0 12 14"><path d="M6 1.5V13" stroke="#5e6163" stroke-width="1.6"/><path d="M1.5 6L6 1.5L10.5 6" stroke="#5e6163" stroke-width="1.6" fill="none"/></svg>
<svg class="a" style="left:1323px;top:92px;" width="12" height="14" viewBox="0 0 12 14"><path d="M6 1V12.5" stroke="#5e6163" stroke-width="1.6"/><path d="M1.5 8L6 12.5L10.5 8" stroke="#5e6163" stroke-width="1.6" fill="none"/></svg>
<svg class="a" style="left:1349px;top:93px;" width="13" height="12" viewBox="0 0 13 12"><rect x="0.6" y="0.6" width="11" height="10.5" fill="none" stroke="#5e6163" stroke-width="1.2"/><rect x="0.6" y="7.2" width="6.5" height="3.9" fill="#5e6163"/></svg>
<div class="a" style="left:1371px;top:89px;width:1px;height:20px;background:#4a4d4f;"></div>
<svg class="a" style="left:1381px;top:91px;" width="20" height="17" viewBox="0 0 20 17"><path d="M5 0V10M0 5H10" stroke="#5e6163" stroke-width="1.8"/><path d="M10.5 8.5H13M14 8.5H16.5M10.5 16H13M14 8.5H16.5M14 16H16.5M11.8 8.5V16M15.2 8.5V16" stroke="#5e6163" stroke-width="0.9" stroke-dasharray="1 0.6"/></svg>
<svg class="a" style="left:1407px;top:91px;" width="20" height="17" viewBox="0 0 20 17"><path d="M0 5H10" stroke="#5e6163" stroke-width="1.8"/><path d="M10.5 8.5H13M14 8.5H16.5M10.5 16H13M14 8.5H16.5M14 16H16.5M11.8 8.5V16M15.2 8.5V16" stroke="#5e6163" stroke-width="0.9" stroke-dasharray="1 0.6"/></svg>
<svg class="a" style="left:1432px;top:91px;" width="20" height="17" viewBox="0 0 20 17"><path d="M0.6 1.5H7V8.4H0.6Z" fill="none" stroke="#5e6163" stroke-width="1.1"/><path d="M2 4.5L4 6.5L8.5 1" stroke="#5e6163" stroke-width="1.2" fill="none"/><path d="M10.5 8.5H13M14 8.5H16.5M10.5 16H13M14 8.5H16.5M14 16H16.5M11.8 8.5V16M15.2 8.5V16" stroke="#5e6163" stroke-width="0.9" stroke-dasharray="1 0.6"/></svg>
<div class="a" style="left:1456px;top:89px;width:1px;height:20px;background:#4a4d4f;"></div>
<svg class="a" style="left:1466px;top:92px;" width="16" height="16" viewBox="0 0 16 16"><path d="M1 2H13M1 6H8M1 10H6M1 14H8" stroke="#afb1b3" stroke-width="1.6"/><path d="M9.5 7.5H14.5M12 7.5V15M9.5 15H14.5" stroke="#afb1b3" stroke-width="1.1"/></svg>
<svg class="a" style="left:1490px;top:92px;" width="14" height="14" viewBox="0 0 14 14"><path d="M0.5 1H13.5L8.5 7V13.5L5.5 11V7Z" fill="#afb1b3"/></svg>
<svg class="a" style="left:1884px;top:94px;" width="10" height="10" viewBox="0 0 10 10"><path d="M0.5 0.5L9.5 9.5M9.5 0.5L0.5 9.5" stroke="#5e6163" stroke-width="1"/></svg>
<div class="a" style="left:455px;top:113px;width:1444px;height:542px;background:#2b2b2b;"></div>
<div class="a" style="left:455px;top:113px;width:58px;height:542px;background:#313335;"></div>
<div class="a" style="left:514px;top:113px;width:1385px;height:13px;background:#323232;"></div>
<div class="a" style="left:513px;top:113px;width:1px;height:542px;background:#555555;"></div>
<div class="a" style="left:1479px;top:113px;width:1px;height:542px;background:#474747;"></div>
<div class="a" style="left:455px;top:113px;width:1444px;height:542px;overflow:hidden">
<div class="a m" style="left:0;top:-7px;width:20px;text-align:right;font-size:12.5px;line-height:22px;color:#a4a3a3;width:19px">43</div>
<div class="a m" style="left:0;top:15px;width:20px;text-align:right;font-size:12.5px;line-height:22px;color:#606366;width:19px">44</div>
<div class="a m" style="left:64px;top:14px;font-size:13.34px;line-height:22px;color:#a9b7c6"><span style="color:#808080">// 模块初始化</span></div>
<div class="a m" style="left:0;top:37px;width:20px;text-align:right;font-size:12.5px;line-height:22px;color:#606366;width:19px">45</div>
<div class="a m" style="left:64px;top:36px;font-size:13.34px;line-height:22px;color:#a9b7c6"><span style="color:#cc7832">static</span> <span style="color:#cc7832">int</span><span style="color:#a9b7c6"> __init my_char_init(</span><span style="color:#cc7832">void</span><span style="color:#a9b7c6">) {</span></div>
<div class="a m" style="left:0;top:59px;width:20px;text-align:right;font-size:12.5px;line-height:22px;color:#606366;width:19px">46</div>
<div class="a m" style="left:64px;top:58px;font-size:13.34px;line-height:22px;color:#a9b7c6">&nbsp;&nbsp;&nbsp;&nbsp;<span style="color:#808080">// 自动申请设备号</span></div>
<div class="a m" style="left:0;top:81px;width:20px;text-align:right;font-size:12.5px;line-height:22px;color:#606366;width:19px">47</div>
<div class="a m" style="left:64px;top:80px;font-size:13.34px;line-height:22px;color:#a9b7c6">&nbsp;&nbsp;&nbsp;&nbsp;<span style="color:#a9b7c6">majorNumber = register_chrdev(</span><span style="color:#6897bb">0</span><span style="color:#a9b7c6">, DEVICE_NAME, &amp;fops);</span></div>
<div class="a m" style="left:0;top:103px;width:20px;text-align:right;font-size:12.5px;line-height:22px;color:#606366;width:19px">48</div>
<div class="a m" style="left:64px;top:102px;font-size:13.34px;line-height:22px;color:#a9b7c6">&nbsp;&nbsp;&nbsp;&nbsp;<span style="color:#cc7832">if</span><span style="color:#a9b7c6"> (majorNumber &lt; </span><span style="color:#6897bb">0</span><span style="color:#a9b7c6">) {</span></div>
<div class="a m" style="left:0;top:125px;width:20px;text-align:right;font-size:12.5px;line-height:22px;color:#606366;width:19px">49</div>
<div class="a m" style="left:64px;top:124px;font-size:13.34px;line-height:22px;color:#a9b7c6">&nbsp;&nbsp;&nbsp;&nbsp;&nbsp;&nbsp;&nbsp;&nbsp;<span style="color:#a9b7c6">printk(KERN_ALERT </span><span style="color:#6a8759">"my_char_device failed to register a major number</span><span style="color:#5050e0">\n</span><span style="color:#6a8759">"</span><span style="color:#a9b7c6">);</span></div>
<div class="a m" style="left:0;top:147px;width:20px;text-align:right;font-size:12.5px;line-height:22px;color:#606366;width:19px">50</div>
<div class="a m" style="left:64px;top:146px;font-size:13.34px;line-height:22px;color:#a9b7c6">&nbsp;&nbsp;&nbsp;&nbsp;&nbsp;&nbsp;&nbsp;&nbsp;<span style="color:#cc7832">return</span><span style="color:#a9b7c6"> majorNumber;</span></div>
<div class="a m" style="left:0;top:169px;width:20px;text-align:right;font-size:12.5px;line-height:22px;color:#606366;width:19px">51</div>
<div class="a m" style="left:64px;top:168px;font-size:13.34px;line-height:22px;color:#a9b7c6">&nbsp;&nbsp;&nbsp;&nbsp;<span style="color:#a9b7c6">}</span></div>
<div class="a m" style="left:0;top:191px;width:20px;text-align:right;font-size:12.5px;line-height:22px;color:#606366;width:19px">52</div>
<div class="a m" style="left:64px;top:190px;font-size:13.34px;line-height:22px;color:#a9b7c6">&nbsp;&nbsp;&nbsp;&nbsp;<span style="color:#a9b7c6">printk(KERN_INFO </span><span style="color:#6a8759">"my_char_device: registered correctly with major number %d</span><span style="color:#5050e0">\n</span><span style="color:#6a8759">"</span><span style="color:#a9b7c6">, majorNumber);</span></div>
<div class="a m" style="left:0;top:213px;width:20px;text-align:right;font-size:12.5px;line-height:22px;color:#606366;width:19px">53</div>
<div class="a m" style="left:0;top:235px;width:20px;text-align:right;font-size:12.5px;line-height:22px;color:#606366;width:19px">54</div>
<div class="a m" style="left:64px;top:234px;font-size:13.34px;line-height:22px;color:#a9b7c6">&nbsp;&nbsp;&nbsp;&nbsp;<span style="color:#808080">// 创建设备类</span></div>
<div class="a m" style="left:0;top:257px;width:20px;text-align:right;font-size:12.5px;line-height:22px;color:#606366;width:19px">55</div>
<div class="a m" style="left:64px;top:256px;font-size:13.34px;line-height:22px;color:#a9b7c6">&nbsp;&nbsp;&nbsp;&nbsp;<span style="color:#a9b7c6">myCharClass = class_create(THIS_MODULE, CLASS_NAME);</span></div>
<div class="a m" style="left:0;top:279px;width:20px;text-align:right;font-size:12.5px;line-height:22px;color:#606366;width:19px">56</div>
<div class="a m" style="left:64px;top:278px;font-size:13.34px;line-height:22px;color:#a9b7c6">&nbsp;&nbsp;&nbsp;&nbsp;<span style="color:#cc7832">if</span><span style="color:#a9b7c6"> (IS_ERR(myCharClass)) {</span></div>
<div class="a m" style="left:0;top:301px;width:20px;text-align:right;font-size:12.5px;line-height:22px;color:#606366;width:19px">57</div>
<div class="a m" style="left:64px;top:300px;font-size:13.34px;line-height:22px;color:#a9b7c6">&nbsp;&nbsp;&nbsp;&nbsp;&nbsp;&nbsp;&nbsp;&nbsp;<span style="color:#a9b7c6">unregister_chrdev(majorNumber, DEVICE_NAME);</span></div>
<div class="a m" style="left:0;top:323px;width:20px;text-align:right;font-size:12.5px;line-height:22px;color:#606366;width:19px">58</div>
<div class="a m" style="left:64px;top:322px;font-size:13.34px;line-height:22px;color:#a9b7c6">&nbsp;&nbsp;&nbsp;&nbsp;&nbsp;&nbsp;&nbsp;&nbsp;<span style="color:#a9b7c6">printk(KERN_ALERT </span><span style="color:#6a8759">"Failed to register device class</span><span style="color:#5050e0">\n</span><span style="color:#6a8759">"</span><span style="color:#a9b7c6">);</span></div>
<div class="a m" style="left:0;top:345px;width:20px;text-align:right;font-size:12.5px;line-height:22px;color:#606366;width:19px">59</div>
<div class="a m" style="left:64px;top:344px;font-size:13.34px;line-height:22px;color:#a9b7c6">&nbsp;&nbsp;&nbsp;&nbsp;&nbsp;&nbsp;&nbsp;&nbsp;<span style="color:#cc7832">return</span><span style="color:#a9b7c6"> PTR_ERR(myCharClass);</span></div>
<div class="a m" style="left:0;top:367px;width:20px;text-align:right;font-size:12.5px;line-height:22px;color:#606366;width:19px">60</div>
<div class="a m" style="left:64px;top:366px;font-size:13.34px;line-height:22px;color:#a9b7c6">&nbsp;&nbsp;&nbsp;&nbsp;<span style="color:#a9b7c6">}</span></div>
<div class="a m" style="left:0;top:389px;width:20px;text-align:right;font-size:12.5px;line-height:22px;color:#606366;width:19px">61</div>
<div class="a m" style="left:0;top:411px;width:20px;text-align:right;font-size:12.5px;line-height:22px;color:#606366;width:19px">62</div>
<div class="a m" style="left:64px;top:410px;font-size:13.34px;line-height:22px;color:#a9b7c6">&nbsp;&nbsp;&nbsp;&nbsp;<span style="color:#808080">// 创建设备</span></div>
<div class="a m" style="left:0;top:433px;width:20px;text-align:right;font-size:12.5px;line-height:22px;color:#606366;width:19px">63</div>
<div class="a m" style="left:64px;top:432px;font-size:13.34px;line-height:22px;color:#a9b7c6">&nbsp;&nbsp;&nbsp;&nbsp;<span style="color:#a9b7c6">device_create(myCharClass, NULL, MKDEV(majorNumber, </span><span style="color:#6897bb">0</span><span style="color:#a9b7c6">), NULL, DEVICE_NAME);</span></div>
<div class="a m" style="left:0;top:455px;width:20px;text-align:right;font-size:12.5px;line-height:22px;color:#606366;width:19px">64</div>
<div class="a m" style="left:64px;top:454px;font-size:13.34px;line-height:22px;color:#a9b7c6">&nbsp;&nbsp;&nbsp;&nbsp;<span style="color:#a9b7c6">printk(KERN_INFO </span><span style="color:#6a8759">"my_char_device: device class created correctly</span><span style="color:#5050e0">\n</span><span style="color:#6a8759">"</span><span style="color:#a9b7c6">);</span></div>
<div class="a m" style="left:0;top:477px;width:20px;text-align:right;font-size:12.5px;line-height:22px;color:#606366;width:19px">65</div>
<div class="a m" style="left:64px;top:476px;font-size:13.34px;line-height:22px;color:#a9b7c6">&nbsp;&nbsp;&nbsp;&nbsp;<span style="color:#cc7832">return</span> <span style="color:#6897bb">0</span><span style="color:#a9b7c6">;</span></div>
<div class="a m" style="left:0;top:499px;width:20px;text-align:right;font-size:12.5px;line-height:22px;color:#606366;width:19px">66</div>
<div class="a m" style="left:64px;top:498px;font-size:13.34px;line-height:22px;color:#a9b7c6"><span style="color:#a9b7c6">}</span></div>
<div class="a m" style="left:0;top:521px;width:20px;text-align:right;font-size:12.5px;line-height:22px;color:#606366;width:19px">67</div>
</div>
<svg class="a" style="left:509px;top:152px;" width="9" height="13" viewBox="0 0 9 13"><path d="M0.5 0.5H8.5V7L4.5 11.5L0.5 7Z" fill="#313335" stroke="#7a7d80"/><path d="M2.5 4.5H6.5" stroke="#7a7d80"/></svg>
<svg class="a" style="left:509px;top:218px;" width="9" height="13" viewBox="0 0 9 13"><path d="M0.5 0.5H8.5V7L4.5 11.5L0.5 7Z" fill="#313335" stroke="#7a7d80"/><path d="M2.5 4.5H6.5" stroke="#7a7d80"/></svg>
<svg class="a" style="left:509px;top:394px;" width="9" height="13" viewBox="0 0 9 13"><path d="M0.5 0.5H8.5V7L4.5 11.5L0.5 7Z" fill="#313335" stroke="#7a7d80"/><path d="M2.5 4.5H6.5" stroke="#7a7d80"/></svg>
<svg class="a" style="left:509px;top:283px;" width="9" height="13" viewBox="0 0 9 13"><path d="M0.5 12.5H8.5V6L4.5 1.5L0.5 6Z" fill="#313335" stroke="#7a7d80"/><path d="M2.5 8.5H6.5" stroke="#7a7d80"/></svg>
<svg class="a" style="left:509px;top:481px;" width="9" height="13" viewBox="0 0 9 13"><path d="M0.5 12.5H8.5V6L4.5 1.5L0.5 6Z" fill="#313335" stroke="#7a7d80"/><path d="M2.5 8.5H6.5" stroke="#7a7d80"/></svg>
<svg class="a" style="left:509px;top:613px;" width="9" height="13" viewBox="0 0 9 13"><path d="M0.5 12.5H8.5V6L4.5 1.5L0.5 6Z" fill="#313335" stroke="#7a7d80"/><path d="M2.5 8.5H6.5" stroke="#7a7d80"/></svg>
<div class="a" style="left:548px;top:236px;width:1px;height:44px;background:#393939;"></div>
<div class="a" style="left:548px;top:412px;width:1px;height:66px;background:#393939;"></div>
<svg class="a" style="left:735px;top:210px;" width="48" height="3" viewBox="0 0 48 3"><path d="M0 2 L1.5 0 L3 2 L4.5 0 L6 2 L7.5 0 L9 2 L10.5 0 L12 2 L13.5 0 L15 2 L16.5 0 L18 2 L19.5 0 L21 2 L22.5 0 L24 2 L25.5 0 L27 2 L28.5 0 L30 2 L31.5 0 L33 2 L34.5 0 L36 2 L37.5 0 L39 2 L40.5 0 L42 2 L43.5 0 L45 2 L46.5 0 L48 2" stroke="#6a8759" stroke-width="0.8" fill="none"/></svg>
<svg class="a" style="left:583px;top:254px;" width="48" height="3" viewBox="0 0 48 3"><path d="M0 2 L1.5 0 L3 2 L4.5 0 L6 2 L7.5 0 L9 2 L10.5 0 L12 2 L13.5 0 L15 2 L16.5 0 L18 2 L19.5 0 L21 2 L22.5 0 L24 2 L25.5 0 L27 2 L28.5 0 L30 2 L31.5 0 L33 2 L34.5 0 L36 2 L37.5 0 L39 2 L40.5 0 L42 2 L43.5 0 L45 2 L46.5 0 L48 2" stroke="#6a8759" stroke-width="0.8" fill="none"/></svg>
<svg class="a" style="left:551px;top:320px;" width="48" height="3" viewBox="0 0 48 3"><path d="M0 2 L1.5 0 L3 2 L4.5 0 L6 2 L7.5 0 L9 2 L10.5 0 L12 2 L13.5 0 L15 2 L16.5 0 L18 2 L19.5 0 L21 2 L22.5 0 L24 2 L25.5 0 L27 2 L28.5 0 L30 2 L31.5 0 L33 2 L34.5 0 L36 2 L37.5 0 L39 2 L40.5 0 L42 2 L43.5 0 L45 2 L46.5 0 L48 2" stroke="#6a8759" stroke-width="0.8" fill="none"/></svg>
<svg class="a" style="left:583px;top:452px;" width="48" height="3" viewBox="0 0 48 3"><path d="M0 2 L1.5 0 L3 2 L4.5 0 L6 2 L7.5 0 L9 2 L10.5 0 L12 2 L13.5 0 L15 2 L16.5 0 L18 2 L19.5 0 L21 2 L22.5 0 L24 2 L25.5 0 L27 2 L28.5 0 L30 2 L31.5 0 L33 2 L34.5 0 L36 2 L37.5 0 L39 2 L40.5 0 L42 2 L43.5 0 L45 2 L46.5 0 L48 2" stroke="#6a8759" stroke-width="0.8" fill="none"/></svg>
<svg class="a" style="left:551px;top:584px;" width="48" height="3" viewBox="0 0 48 3"><path d="M0 2 L1.5 0 L3 2 L4.5 0 L6 2 L7.5 0 L9 2 L10.5 0 L12 2 L13.5 0 L15 2 L16.5 0 L18 2 L19.5 0 L21 2 L22.5 0 L24 2 L25.5 0 L27 2 L28.5 0 L30 2 L31.5 0 L33 2 L34.5 0 L36 2 L37.5 0 L39 2 L40.5 0 L42 2 L43.5 0 L45 2 L46.5 0 L48 2" stroke="#6a8759" stroke-width="0.8" fill="none"/></svg>
<svg class="a" style="left:671px;top:430px;" width="48" height="3" viewBox="0 0 48 3"><path d="M0 2 L1.5 0 L3 2 L4.5 0 L6 2 L7.5 0 L9 2 L10.5 0 L12 2 L13.5 0 L15 2 L16.5 0 L18 2 L19.5 0 L21 2 L22.5 0 L24 2 L25.5 0 L27 2 L28.5 0 L30 2 L31.5 0 L33 2 L34.5 0 L36 2 L37.5 0 L39 2 L40.5 0 L42 2 L43.5 0 L45 2 L46.5 0 L48 2" stroke="#6a8759" stroke-width="0.8" fill="none"/></svg>
<svg class="a" style="left:815px;top:562px;" width="40" height="3" viewBox="0 0 40 3"><path d="M0 2 L1.5 0 L3 2 L4.5 0 L6 2 L7.5 0 L9 2 L10.5 0 L12 2 L13.5 0 L15 2 L16.5 0 L18 2 L19.5 0 L21 2 L22.5 0 L24 2 L25.5 0 L27 2 L28.5 0 L30 2 L31.5 0 L33 2 L34.5 0 L36 2 L37.5 0 L39 2 L40.5 0 L42 2" stroke="#6a8759" stroke-width="0.8" fill="none"/></svg>
<div class="a" style="left:1813px;top:116px;width:84px;height:24px;background:#2b2b2b;border-radius:6px 6px 0 0"></div>
<svg class="a" style="left:1821px;top:121px;" width="13" height="14" viewBox="0 0 13 14"><path d="M1.5 5.5L5 9L11.5 2" stroke="#3f7f4a" stroke-width="2.3" fill="none"/><path d="M1 13L3.5 10.5L6 13L8.5 10.5L11 13" stroke="#3f7f4a" stroke-width="1" fill="none"/></svg>
<div class="a" style="left:1838px;top:120px;color:#9c9c9c;font-size:12.5px;font-weight:normal;font-family:"Liberation Sans",sans-serif;line-height:16px">26</div>
<svg class="a" style="left:1862px;top:123px;" width="9" height="7" viewBox="0 0 9 7"><path d="M0.8 5.5L4.5 1.5L8.2 5.5" stroke="#b8b8b8" stroke-width="1.4" fill="none"/></svg>
<svg class="a" style="left:1883px;top:124px;" width="9" height="7" viewBox="0 0 9 7"><path d="M0.8 1.2L4.5 5.2L8.2 1.2" stroke="#b8b8b8" stroke-width="1.4" fill="none"/></svg>
<div class="a" style="left:1889px;top:388px;width:8px;height:142px;background:#48494a;border-radius:0"></div>
<div class="a" style="left:1898px;top:57px;width:1px;height:940px;background:#323232;"></div>
<div class="a" style="left:1899px;top:57px;width:21px;height:940px;background:#3c3f41;"></div>
<svg class="a" style="left:1904px;top:67px;" width="12" height="14" viewBox="0 0 12 14"><ellipse cx="6" cy="2.5" rx="5.5" ry="2.2" fill="#afb1b3"/><path d="M0.5 4V6.5C0.5 8 3 8.7 6 8.7C9 8.7 11.5 8 11.5 6.5V4C11.5 5.5 9 6.2 6 6.2C3 6.2 0.5 5.5 0.5 4Z" fill="#afb1b3"/><path d="M0.5 8V10.5C0.5 12 3 12.7 6 12.7C9 12.7 11.5 12 11.5 10.5V8C11.5 9.5 9 10.2 6 10.2C3 10.2 0.5 9.5 0.5 8Z" fill="#afb1b3"/></svg>
<div class="a" style="left:1915px;top:85px;color:#bbbbbb;font-size:11.5px;line-height:14px;transform-origin:0 0;transform:rotate(90deg)">Database</div>
<svg class="a" style="left:1903px;top:153px;" width="14" height="14" viewBox="0 0 14 14"><g transform="scale(0.82)"><path d="M5 0.5L11 0.5L12.5 3.5H16L13.5 8L16 12.5H12.5L11 15.5H5L3.5 12.5H0.5L2.5 8L0.5 3.5H3.5Z" fill="#c9c9c9"/><path d="M4.5 4.5H12.5L8.5 12Z" fill="none" stroke="#3c3f41" stroke-width="1.5"/></g></svg>
<div class="a" style="left:1916px;top:170px;color:#bbbbbb;font-size:10.8px;line-height:14px;transform-origin:0 0;transform:rotate(90deg)">通义灵码</div>
<div class="a" style="left:22px;top:655px;width:1876px;height:342px;background:#2b2b2b;"></div>
<div class="a" style="left:22px;top:654px;width:1876px;height:1px;background:#323232;"></div>
<div class="a" style="left:22px;top:655px;width:1876px;height:26px;background:#3c3f41;"></div>
<div class="a" style="left:28px;top:661px;color:#bbbbbb;font-size:13px;font-weight:normal;font-family:"Liberation Sans",sans-serif;">Terminal:</div>
<div class="a" style="left:100px;top:661px;color:#bbbbbb;font-size:13px;font-weight:normal;font-family:"Liberation Sans",sans-serif;">Local</div>
<svg class="a" style="left:137px;top:664px;" width="9" height="9" viewBox="0 0 9 9"><path d="M0.5 0.5L8.5 8.5M8.5 0.5L0.5 8.5" stroke="#6e7174" stroke-width="1"/></svg>
<div class="a" style="left:88px;top:679px;width:68px;height:3px;background:#747a80;"></div>
<svg class="a" style="left:165px;top:662px;" width="12" height="12" viewBox="0 0 12 12"><path d="M6 0.5V11.5M0.5 6H11.5" stroke="#c5c5c5" stroke-width="1.7"/></svg>
<svg class="a" style="left:1853px;top:661px;" width="13" height="13" viewBox="0 0 13 13"><g transform="scale(0.9285714285714286)"><path d="M6 0H8L8.5 2L10.3 2.8L12 1.7L13.3 3L12.2 4.7L13 6.5L14 7V8L12.9 8.3L12.2 10.2L13.3 11.9L11.9 13.3L10.2 12.2L8.4 12.9L8 14H6L5.6 12.9L3.8 12.2L2.1 13.3L0.7 11.9L1.8 10.2L1.1 8.4L0 8V6L1.1 5.6L1.8 3.8L0.7 2.1L2.1 0.7L3.8 1.8L5.6 1.1Z" fill="#afb1b3"/><circle cx="7" cy="7" r="2.4" fill="#3c3f41"/></g></svg>
<div class="a" style="left:1880px;top:667px;width:12px;height:2px;background:#afb1b3;"></div>
<div class="a m" style="left:26px;top:683px;font-size:13.34px;line-height:22px;color:#bbbbbb">root@RK356X:/# dmesg | grep my_char_device</div>
<div class="a m" style="left:26px;top:705px;font-size:13.34px;line-height:22px;color:#bbbbbb">[&nbsp;&nbsp;&nbsp;&nbsp;0.976921] my_char_device: registered correctly with major number 237</div>
<div class="a m" style="left:26px;top:727px;font-size:13.34px;line-height:22px;color:#bbbbbb">[&nbsp;&nbsp;&nbsp;&nbsp;0.977598] my_char_device: device class created correctly</div>
<div class="a m" style="left:26px;top:749px;font-size:13.34px;line-height:22px;color:#bbbbbb">root@RK356X:/# </div>
<div class="a" style="left:146px;top:748px;width:10px;height:22px;border:1px solid #bbbbbb"></div>
<div class="a" style="left:26px;top:770px;width:1856px;height:22px;background:#214283;"></div>
<div class="a" style="left:1555px;top:925px;width:338px;height:64px;background:#4d4f51;"></div>
<svg class="a" style="left:1566px;top:937px;" width="15" height="15" viewBox="0 0 15 15"><circle cx="7.5" cy="7.5" r="7" fill="#3592c4"/><rect x="6.6" y="6" width="1.9" height="5.5" fill="#fff"/><circle cx="7.5" cy="4" r="1.1" fill="#fff"/></svg>
<div class="a" style="left:1587px;top:937px;color:#bbbbbb;font-size:13.2px;font-weight:normal;font-family:"Liberation Sans",sans-serif;">Externally added files can be added to Git</div>
<div class="a" style="left:1587px;top:959px;color:#589df6;font-size:13px;font-weight:normal;font-family:"Liberation Sans",sans-serif;">View Files</div>
<div class="a" style="left:1659px;top:959px;color:#589df6;font-size:13px;font-weight:normal;font-family:"Liberation Sans",sans-serif;">Always Add</div>
<div class="a" style="left:1742px;top:959px;color:#589df6;font-size:13px;font-weight:normal;font-family:"Liberation Sans",sans-serif;">Don't Ask Again</div>
<div class="a" style="left:0px;top:997px;width:1920px;height:22px;background:#3c3f41;"></div>
<div class="a" style="left:0px;top:997px;width:1920px;height:1px;background:#323232;"></div>
<div class="a" style="left:226px;top:998px;width:83px;height:21px;background:#2d2f31;"></div>
<svg class="a" style="left:31px;top:1002px;" width="12" height="13" viewBox="0 0 12 13"><path d="M2 1V12" stroke="#afb1b3" stroke-width="1.8"/><path d="M2 7H7L10 4" stroke="#afb1b3" stroke-width="1.6" fill="none"/><path d="M7 2H11V6Z" fill="#afb1b3"/></svg>
<div class="a" style="left:47px;top:1002px;color:#bbbbbb;font-size:12px;font-weight:normal;font-family:"Liberation Sans",sans-serif;">Git</div>
<svg class="a" style="left:83px;top:1003px;" width="11" height="11" viewBox="0 0 11 11"><path d="M0 1.5H2M0 5.5H2M0 9.5H2M3.5 1.5H11M3.5 5.5H11M3.5 9.5H11" stroke="#afb1b3" stroke-width="1.6"/></svg>
<div class="a" style="left:98px;top:1002px;color:#bbbbbb;font-size:12px;font-weight:normal;font-family:"Liberation Sans",sans-serif;">TODO</div>
<svg class="a" style="left:151px;top:1003px;" width="12" height="12" viewBox="0 0 12 12"><circle cx="6" cy="6" r="5.5" fill="#afb1b3"/><rect x="5" y="2.5" width="2" height="4.5" fill="#3c3f41"/><rect x="5" y="8.3" width="2" height="1.8" fill="#3c3f41"/></svg>
<div class="a" style="left:167px;top:1002px;color:#bbbbbb;font-size:12px;font-weight:normal;font-family:"Liberation Sans",sans-serif;">Problems</div>
<svg class="a" style="left:237px;top:1003px;" width="12" height="11" viewBox="0 0 12 11"><rect x="0" y="0" width="12" height="11" fill="#afb1b3"/><path d="M2.5 2.5L5.5 5L2.5 7.5" stroke="#2d2f31" stroke-width="1.3" fill="none"/><path d="M6 8.5H9.5" stroke="#2d2f31" stroke-width="1.2"/></svg>
<div class="a" style="left:254px;top:1002px;color:#dfdfdf;font-size:12px;font-weight:normal;font-family:"Liberation Sans",sans-serif;">Terminal</div>
<svg class="a" style="left:319px;top:1002px;" width="14" height="14" viewBox="0 0 14 14"><circle cx="6" cy="6.5" r="5.2" fill="none" stroke="#afb1b3" stroke-width="1.3"/><path d="M6 6.5L7.5 3.5" stroke="#afb1b3"/><path d="M7 7L13.5 10.5L7 14Z" fill="#afb1b3"/></svg>
<div class="a" style="left:337px;top:1002px;color:#bbbbbb;font-size:12px;font-weight:normal;font-family:"Liberation Sans",sans-serif;">Profiler</div>
<svg class="a" style="left:1820px;top:1003px;" width="13" height="13" viewBox="0 0 13 13"><circle cx="6.5" cy="6.5" r="6.5" fill="#499c54"/><text x="4" y="10.5" font-size="9" font-family="Liberation Sans" font-weight="bold" fill="#fff">1</text></svg>
<div class="a" style="left:1837px;top:1002px;color:#bbbbbb;font-size:12px;font-weight:normal;font-family:"Liberation Sans",sans-serif;">Event Log</div>
<div class="a" style="left:0px;top:1019px;width:1920px;height:21px;background:#3c3f41;"></div>
<div class="a" style="left:0px;top:1019px;width:1920px;height:1px;background:#323232;"></div>
<svg class="a" style="left:5px;top:1023px;" width="13" height="12" viewBox="0 0 13 12"><rect x="3" y="0.5" width="9.5" height="8.5" fill="none" stroke="#afb1b3"/><path d="M0.5 3V11.5H9.5" stroke="#afb1b3" fill="none"/></svg>
<div class="a" style="left:27px;top:1022px;color:#bbbbbb;font-size:13.3px;font-weight:normal;font-family:"Liberation Sans",sans-serif;">Externally added files can be added to Git // View Files // Always Add // Don't Ask Again (16 minutes ago)</div>
<div class="a" style="left:1765px;top:1022px;color:#bbbbbb;font-size:13px;font-weight:normal;font-family:"Liberation Sans",sans-serif;">43:1</div>
<svg class="a" style="left:1802px;top:1022px;" width="12" height="16" viewBox="0 0 12 16"><path d="M2.5 2V13" stroke="#afb1b3" stroke-width="1.5"/><circle cx="2.5" cy="2" r="1.6" fill="#afb1b3"/><circle cx="2.5" cy="13.5" r="1.6" fill="#afb1b3"/><circle cx="9.5" cy="3" r="1.6" fill="#afb1b3"/><path d="M9.5 3V5C9.5 8 2.5 8 2.5 11" stroke="#afb1b3" stroke-width="1.5" fill="none"/></svg>
<div class="a" style="left:1818px;top:1022px;color:#bbbbbb;font-size:13px;font-weight:normal;font-family:"Liberation Sans",sans-serif;">master</div>
<svg class="a" style="left:1867px;top:1023px;" width="13" height="13" viewBox="0 0 13 13"><path d="M2 4V2.5C2 1 3 0.5 4 0.5C5 0.5 6 1 6 2.5V6" stroke="#afb1b3" stroke-width="1.4" fill="none"/><rect x="4" y="6" width="8.5" height="6.5" fill="#afb1b3"/></svg>
<svg class="a" style="left:1892px;top:1022px;" width="17" height="16" viewBox="0 0 17 16"><path d="M5 0.5L11 0.5L12.5 3.5H16L13.5 8L16 12.5H12.5L11 15.5H5L3.5 12.5H0.5L2.5 8L0.5 3.5H3.5Z" fill="#6a52ea"/><path d="M4.5 4.5H12.5L8.5 12Z" fill="none" stroke="#ffffff" stroke-width="1.3"/><path d="M12.5 4.5L14 2" stroke="#ffffff" stroke-width="1"/></svg>
<div class="a" style="left:0px;top:1040px;width:1920px;height:8px;background:#1c2630;"></div>
<div class="a" style="left:0px;top:1040px;width:48px;height:8px;background:#1d2a3a;"></div>
<div class="a" style="left:336px;top:1040px;width:1300px;height:8px;background:#21262f;"></div>
<div class="a" style="left:48px;top:1040px;width:288px;height:8px;background:#f0f0f0;"></div>
<div class="a" style="left:583px;top:1040px;width:45px;height:8px;background:#3b404a;"></div>
<div class="a" style="left:628px;top:1040px;width:2px;height:8px;background:#4a4f58;"></div>
<div class="a" style="left:1915px;top:1040px;width:1px;height:8px;background:#5a606a;"></div>
<div class="a" style="left:1814px;top:1043px;color:#e0e0e0;font-size:12px;font-weight:normal;font-family:"Liberation Sans",sans-serif;line-height:14px">14:27</div>
<svg class="a" style="left:1750px;top:660px" width="150" height="150" viewBox="0 0 150 150">
<defs>
<linearGradient id="neck" x1="0" y1="0" x2="1" y2="0"><stop offset="0" stop-color="#e6dfdb"/><stop offset="0.5" stop-color="#a6a19f"/><stop offset="1" stop-color="#b3aeab"/></linearGradient>
</defs>
<path d="M57 70C38 74 20 94 8 118C4 126 4 134 9 139C15 144 26 145 40 138L46 129L101 126L101 113L124 96L122 82C110 78 90 72 74 71Z" fill="#e6dfdb" stroke="#2e2424" stroke-width="1.6"/>
<path d="M7 119C10 116 16 118 22 124C30 130 36 134 41 137C30 144 16 145 9 139C4 134 4 126 7 119Z" fill="#a9a3a1"/>
<path d="M100 77L122 82L124 96L100 96Z" fill="url(#neck)"/>
<path d="M73 72C90 73 108 77 122 83" stroke="#4a3e3e" stroke-width="1.5" fill="none"/>
<path d="M77 95C82 96 88 98 92 100" stroke="#4a3e3e" stroke-width="1.3" fill="none"/>
<path d="M68 14C74 12 84 13 90 14C98 12 108 14 114 19C120 21 126 26 130 34C134 37 135 42 133 46C135 54 135 62 133 68C131 76 126 82 120 84C112 84 104 80 96 76C86 72 72 71 57 70C52 66 48 58 47 48C46 40 48 33 52 29C54 24 58 20 62 18C64 15 66 14 68 14Z" fill="#ffffff" stroke="#2e2424" stroke-width="1.6"/>
<circle cx="65.5" cy="20" r="5" fill="#efeae6"/>
<circle cx="132" cy="39" r="3.2" fill="#efeae6"/>
<ellipse cx="98" cy="55" rx="8" ry="6.5" fill="#f6c3c3"/>
<ellipse cx="131" cy="66" rx="2.5" ry="3" fill="#f8d6d6"/>
<circle cx="105.2" cy="50" r="4.3" fill="#1c1515"/>
<ellipse cx="122.4" cy="55" rx="6.3" ry="6" fill="#1c1515"/>
<ellipse cx="124.6" cy="53.5" rx="1.2" ry="1.8" fill="#ffffff"/>
<path d="M120 61.5L119 70M119 70L115.5 73.8M119 70L120.5 74.4" stroke="#3b3030" stroke-width="1.3" fill="none"/>
<rect x="122" y="88" width="10" height="11.5" rx="1.5" fill="#e5918a" stroke="#2e2424" stroke-width="1.4"/>
<path d="M90 98C102 97 116 97 127 97.5C129 100 129 110 128.5 113.5C116 114.5 102 114.5 90 114C89 108 89 102 90 98Z" fill="#e5918a" stroke="#2e2424" stroke-width="1.9"/>
<path d="M99 113C112 112.5 126 112.5 136.5 113C137.5 117 137.5 123 137 127C124 127.5 110 127.5 99 127.3C98.5 122 98.5 117 99 113Z" fill="#e5918a" stroke="#2e2424" stroke-width="1.9"/>
<path d="M46 125.5C70 124.5 104 124.5 129.5 125.5C130 132 130 139 129.5 144C104 145 70 145 46.5 144.5C45.5 138 45.5 131 46 125.5Z" fill="#e5918a" stroke="#2e2424" stroke-width="1.9"/>
<path d="M93.7 126V144" stroke="#b0564f" stroke-width="1"/>
<path d="M48 128H128M91 100.5H126M100.5 115.5H135" stroke="#f0aaa3" stroke-width="1" opacity="0.6"/>
</svg>
<svg class="a" style="left:1895px;top:646px" width="25" height="122" viewBox="0 0 25 122">
<rect x="2" y="0.6" width="21.5" height="80.5" rx="10.7" fill="#ffffff" stroke="#2a2020" stroke-width="1.3"/>
<rect x="3.5" y="24" width="17.5" height="8.5" rx="3" fill="#9fc3f5"/>
<g font-family="Liberation Sans" font-size="9" font-weight="bold" fill="#2a2222">
<text x="3.8" y="13.5">打字</text>
<text x="3.8" y="22.2">跟随</text>
<text x="3.8" y="31.6">搬砖</text>
<text x="3.8" y="41.6">打工</text>
<text x="3.8" y="50.6">摸鱼</text>
<text x="3.8" y="61">吃饭</text>
</g>
<path d="M16 66.5C12 64.5 7 66 7.5 69.5C8 72.5 16 71.5 16.5 74.5C17 78 11 78.5 7.5 76.5" stroke="#2a2222" stroke-width="2.2" fill="none"/>
<path d="M15 67.2C12 65.8 8.8 66.7 9 69C9.5 71 15 70.8 15.5 74" stroke="#f3c9c9" stroke-width="0.8" fill="none"/>
<path d="M7 90H18.6V95.5H7Z" stroke="#ffffff" stroke-width="2.2" fill="none" stroke-linejoin="round"/><path d="M12.8 86.5V100.5" stroke="#ffffff" stroke-width="2.4"/>
<path d="M6.5 108L10 105.8H15.8L19.2 108L18 111.5H16.2V117H9.6V111.5H7.8Z" fill="#8fbef5" stroke="#2a2a2a" stroke-width="0.8"/>
</svg>
<svg class="a" style="left:0;top:0" width="1920" height="1048" viewBox="0 0 1920 1048"><path d="M538.0 746.0 L545.0 762.5 L545.8 756.9 L665.9 856.2 L667.1 854.8 L550.0 752.0 L555.4 750.3Z" fill="#f93939"/><path d="M929.0 590.0 L914.2 600.6 L919.2 600.0 L811.7 796.1 L813.3 796.9 L925.5 603.5 L927.6 608.2Z" fill="#f93939"/><path d="M1081.8 325.0 L1068.2 338.1 L1072.7 336.7 L908.6 760.7 L910.2 761.3 L1080.5 339.7 L1082.7 343.9Z" fill="#f93939"/></svg>
</body></html>
